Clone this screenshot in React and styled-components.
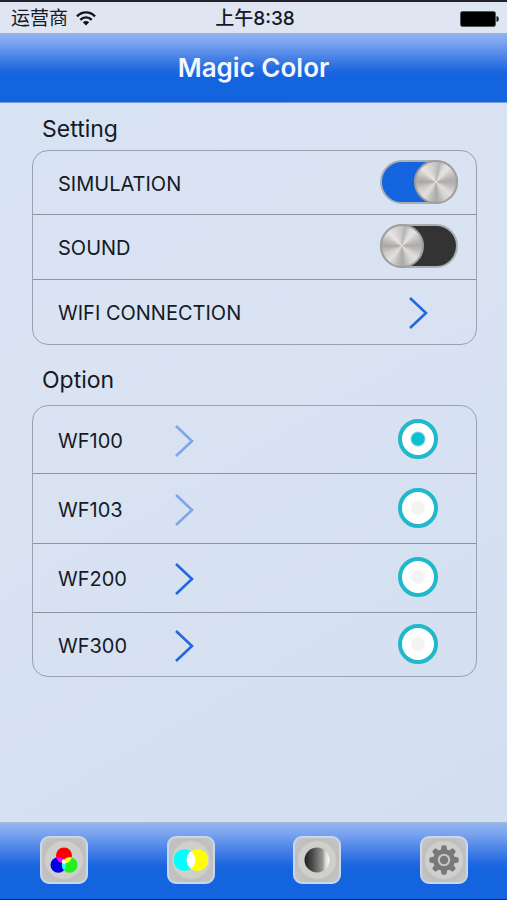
import React, { useState } from "react";
import styled, { createGlobalStyle } from "styled-components";

const GlobalStyle = createGlobalStyle`
  *, *::before, *::after { box-sizing: border-box; }
  body {
    margin: 0;
    background: #d8e2f1;
    color: #141a26;
    font-family: Inter, "Noto Sans CJK SC", sans-serif;
  }
`;

const barGradient =
  "linear-gradient(#92b5f2 0%, #7ba4ee 14%, #4f87e8 32%, #1f68df 54%, #1464e0 62%, #1464e0 100%)";

const Screen = styled.div`
  display: flex;
  flex-direction: column;
  min-height: 100vh;
  border-top: 2px solid #23232f;
  border-bottom: 1px solid #0b2a66;
  background: linear-gradient(150deg, #d6e2f2, #dae3f2 35%, #d5e0f1 70%, #d2dff0);
`;

const StatusBar = styled.div`
  display: grid;
  grid-template-columns: 1fr auto 1fr;
  align-items: center;
  height: 31px;
  padding: 2px 8px 0 11px;
  background: #dfe5f1;
  font-size: 19px;
  line-height: 28px;
`;

const Carrier = styled.div`
  display: flex;
  align-items: center;
  gap: 8px;
`;

const Time = styled.time`
  font-weight: 500;
`;

const Battery = styled.svg`
  justify-self: end;
`;

const Header = styled.header`
  display: flex;
  align-items: center;
  justify-content: center;
  height: 70px;
  border-bottom: 1px solid #6e98e0;
  background: ${barGradient};
`;

const Title = styled.h1`
  margin: 0;
  color: #f2f6ff;
  font-size: 26px;
  font-weight: 600;
  line-height: 32px;
`;

const Content = styled.main`
  flex: 1;
  padding: 11px 30px 24px 32px;
`;

const Section = styled.section`
  margin-bottom: 20px;
`;

const Heading = styled.h2`
  margin: 0;
  padding: 0 10px ${(p) => p.$space}px;
  font-size: 23px;
  font-weight: 400;
  line-height: 30px;
`;

const Panel = styled.div`
  border: 1px solid #9aa1af;
  border-radius: 16px;
`;

const Row = styled.div`
  display: flex;
  align-items: center;
  height: ${(p) => p.$height}px;
  padding: 0 18px 2px 25px;

  & + & {
    border-top: 1px solid #8d94a1;
  }
`;

const RowLabel = styled.label`
  flex: ${(p) => (p.$fixed ? "0 0 116px" : "1")};
  padding-top: 4px;
  font-size: 20px;
  line-height: 28px;
`;

const Switch = styled.input`
  appearance: none;
  display: flex;
  align-items: center;
  justify-content: ${(p) => (p.checked ? "flex-end" : "flex-start")};
  width: 78px;
  height: 44px;
  margin: 0;
  border: 2px solid #a9adb4;
  border-radius: 22px;
  background: ${(p) => (p.checked ? "#1464e0" : "#333333")};
  cursor: pointer;

  &::before {
    content: "";
    width: 44px;
    height: 44px;
    margin: 0 -2px;
    border: 2px solid #a19f9d;
    border-radius: 50%;
    background: conic-gradient(
      #c4c3c1, #b4b3b1 10deg, #dddcda 28deg, #e4e3e1 42deg, #c8c7c5 60deg,
      #adacaa 85deg, #b8b7b5 100deg, #e0dfdd 130deg, #d6d5d3 150deg,
      #aaa9a7 178deg, #bcbbb9 195deg, #e2e1df 220deg, #cfcecc 245deg,
      #a9a8a6 270deg, #b9b8b6 285deg, #e6e5e3 315deg, #d9d8d6 335deg, #c4c3c1
    );
  }
`;

const LinkButton = styled.button`
  display: flex;
  margin: ${(p) => (p.$end ? "4px 28px 0 0" : "4px auto 0 0")};
  padding: 0;
  border: 0;
  background: none;
  color: ${(p) => (p.$muted ? "#80a5e8" : "#2368dc")};
  cursor: pointer;
`;

const Radio = styled.input`
  appearance: none;
  width: 40px;
  height: 40px;
  margin: 0 20px 0 0;
  border: 4px solid #20b9ca;
  border-radius: 50%;
  background: radial-gradient(
    circle,
    ${(p) => (p.checked ? "#0fbfd0" : "#f3f3f4")} 6px,
    #ffffff 8px
  );
  cursor: pointer;
`;

const TabBar = styled.nav`
  display: flex;
  align-items: center;
  justify-content: space-between;
  height: 77px;
  padding: 0 39px 2px 40px;
  border-top: 1px solid #a3b8dc;
  background: ${barGradient};
`;

const TabButton = styled.button`
  display: flex;
  align-items: center;
  justify-content: center;
  width: 48px;
  height: 48px;
  padding: 0;
  border: 2px solid #c9d6ec;
  border-radius: 9px;
  background: radial-gradient(circle, #cfd0cc 18px, #bfbfbf 20px, #c6c6c7);
  cursor: pointer;
`;

const Chevron = () => (
  <svg width="22" height="34" viewBox="0 0 22 34" fill="none" stroke="currentColor" strokeWidth="2.6" aria-hidden="true">
    <path d="M2 2 L18 17 L2 32" />
  </svg>
);

const WifiIcon = () => (
  <svg width="20" height="15" viewBox="0 0 20 15" fill="none" stroke="#10131a" strokeWidth="2.4" aria-hidden="true">
    <path d="M1 5.3 C6 0.1 14 0.1 19 5.3" />
    <path d="M4.3 8.8 C7.5 5.5 12.5 5.5 15.7 8.8" />
    <path d="M10 14.5 L6.8 11.3 C8.6 9.7 11.4 9.7 13.2 11.3 Z" fill="#10131a" stroke="none" />
  </svg>
);

const BatteryIcon = () => (
  <Battery width="39" height="16" viewBox="0 0 39 16" role="img" aria-label="Battery full">
    <rect x="0.5" y="0.5" width="35" height="15" rx="2" fill="#000" stroke="#50545c" />
    <path d="M36.5 5 C39.5 5.5 39.5 10.5 36.5 11 Z" fill="#10131a" />
  </Battery>
);

const RgbIcon = () => (
  <svg width="32" height="32" viewBox="0 0 32 32" aria-hidden="true">
    <clipPath id="rgb-red"><circle cx="16" cy="11.5" r="8" /></clipPath>
    <clipPath id="rgb-blue"><circle cx="10.3" cy="21" r="7.8" /></clipPath>
    <circle cx="16" cy="11.5" r="8" fill="#ff0000" />
    <circle cx="10.3" cy="21" r="7.8" fill="#0000e6" />
    <circle cx="21.7" cy="21" r="7.8" fill="#22ee22" />
    <g clipPath="url(#rgb-red)">
      <circle cx="10.3" cy="21" r="7.8" fill="#ff00ff" />
      <circle cx="21.7" cy="21" r="7.8" fill="#ffff20" />
    </g>
    <g clipPath="url(#rgb-blue)">
      <circle cx="21.7" cy="21" r="7.8" fill="#20ffff" />
      <circle cx="16" cy="17.5" r="2.2" fill="#ffffff" />
    </g>
  </svg>
);

const CyanYellowIcon = () => (
  <svg width="36" height="32" viewBox="0 0 36 32" aria-hidden="true">
    <clipPath id="cyan-disc"><circle cx="11.5" cy="16" r="10.8" /></clipPath>
    <circle cx="11.5" cy="16" r="10.8" fill="#00ffff" />
    <circle cx="24.5" cy="16" r="10.8" fill="#ffff00" />
    <circle cx="24.5" cy="16" r="10.8" fill="#ffffff" clipPath="url(#cyan-disc)" />
  </svg>
);

const BrightnessIcon = () => (
  <svg width="28" height="28" viewBox="0 0 28 28" aria-hidden="true">
    <defs>
      <linearGradient id="shade">
        <stop offset="0" stopColor="#202020" />
        <stop offset="0.3" stopColor="#484848" />
        <stop offset="0.72" stopColor="#969696" />
        <stop offset="0.84" stopColor="#d8d8d8" />
        <stop offset="1" stopColor="#ffffff" />
      </linearGradient>
    </defs>
    <circle cx="14" cy="14" r="12.5" fill="url(#shade)" />
  </svg>
);

const GearIcon = () => (
  <svg width="32" height="32" viewBox="0 0 32 32" aria-hidden="true">
    {[0, 45, 90, 135, 180, 225, 270, 315].map((angle) => (
      <path key={angle} d="M12.6 7 L13.6 1.8 Q16 0.6 18.4 1.8 L19.4 7 Z" fill="#777879" transform={`rotate(${angle} 16 16)`} />
    ))}
    <circle cx="16" cy="16" r="10.8" fill="#777879" />
    <circle cx="16" cy="16" r="5.2" fill="none" stroke="#c6c7c5" strokeWidth="2" />
  </svg>
);

const options = [
  { name: "WF100", height: 67, muted: true },
  { name: "WF103", height: 70, muted: true },
  { name: "WF200", height: 69, muted: false },
  { name: "WF300", height: 64, muted: false },
];

const tabs = [
  { label: "RGB colors", Icon: RgbIcon },
  { label: "Color temperature", Icon: CyanYellowIcon },
  { label: "Brightness", Icon: BrightnessIcon },
  { label: "Settings", Icon: GearIcon },
];

export default function App() {
  const [simulation, setSimulation] = useState(true);
  const [sound, setSound] = useState(false);
  const [device, setDevice] = useState("WF100");

  return (
    <>
      <GlobalStyle />
      <Screen>
        <StatusBar>
          <Carrier>
            <span>运营商</span>
            <WifiIcon />
          </Carrier>
          <Time>上午8:38</Time>
          <BatteryIcon />
        </StatusBar>
        <Header>
          <Title>Magic Color</Title>
        </Header>
        <Content>
          <Section>
            <Heading $space={6}>Setting</Heading>
            <Panel>
              <Row $height={63}>
                <RowLabel htmlFor="simulation">SIMULATION</RowLabel>
                <Switch id="simulation" type="checkbox" role="switch" checked={simulation} onChange={(e) => setSimulation(e.target.checked)} />
              </Row>
              <Row $height={65}>
                <RowLabel htmlFor="sound">SOUND</RowLabel>
                <Switch id="sound" type="checkbox" role="switch" checked={sound} onChange={(e) => setSound(e.target.checked)} />
              </Row>
              <Row $height={65}>
                <RowLabel htmlFor="wifi">WIFI CONNECTION</RowLabel>
                <LinkButton id="wifi" type="button" $end>
                  <Chevron />
                </LinkButton>
              </Row>
            </Panel>
          </Section>
          <Section>
            <Heading $space={10}>Option</Heading>
            <Panel>
              {options.map(({ name, height, muted }) => (
                <Row key={name} $height={height}>
                  <RowLabel htmlFor={name} $fixed>{name}</RowLabel>
                  <LinkButton type="button" aria-label={`${name} details`} $muted={muted}>
                    <Chevron />
                  </LinkButton>
                  <Radio id={name} type="radio" name="device" checked={device === name} onChange={() => setDevice(name)} />
                </Row>
              ))}
            </Panel>
          </Section>
        </Content>
        <TabBar>
          {tabs.map(({ label, Icon }) => (
            <TabButton key={label} type="button" aria-label={label}>
              <Icon />
            </TabButton>
          ))}
        </TabBar>
      </Screen>
    </>
  );
}
